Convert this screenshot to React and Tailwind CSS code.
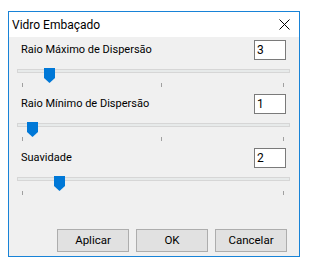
import React from 'react';

const sliders = [
  { label: 'Raio Máximo de Dispersão', value: '3', thumb: 'left-[27px]', mid: true },
  { label: 'Raio Mínimo de Dispersão', value: '1', thumb: 'left-[10px]', mid: true },
  { label: 'Suavidade', value: '2', thumb: 'left-[37px]', mid: false },
];

const Thumb = () => (
  <svg width="11" height="15" viewBox="0 0 11 15" className="block">
    <path d="M0 0 H11 V10 L5.5 15 L0 10 Z" fill="#0078d7" />
  </svg>
);

const SliderRow = ({ label, value, thumb, mid }) => (
  <div className="flex flex-col">
    <div className="flex items-center justify-between h-[20px] pl-[12px] pr-[13px]">
      <span className="text-[11px] text-black">{label}</span>
      <div className="w-[32px] h-[20px] border border-[#7a7a7a] bg-white text-[12px] leading-[18px] pl-[2px] text-black">
        {value}
      </div>
    </div>
    <div className="relative ml-[8px] w-[273px] h-[19px] mt-[8px]">
      <div className="absolute left-0 right-0 top-[1px] h-[4px] border border-[#d6d6d6] bg-[#e7eaea]" />
      <div className={`absolute top-0 ${thumb}`}>
        <Thumb />
      </div>
      <div className="absolute left-[5px] top-[15px] w-px h-[4px] bg-[#a0a0a0]" />
      {mid && <div className="absolute left-[144px] top-[15px] w-px h-[4px] bg-[#a0a0a0]" />}
      <div className="absolute left-[266px] top-[15px] w-px h-[4px] bg-[#a0a0a0]" />
    </div>
  </div>
);

export default function App() {
  return (
    <div className="w-[335px] h-[268px] bg-white pt-[11px] pl-[8px] font-['Roboto',sans-serif]">
      <div className="w-[292px] h-[246px] border border-[#1883d7] bg-[#f0f0f0] flex flex-col">
        <div className="h-[25px] bg-white flex items-center justify-between pl-[3px] pr-[9px]">
          <span className="text-[12px] text-black">Vidro Embaçado</span>
          <svg width="11" height="11" viewBox="0 0 11 11">
            <path d="M0.5 0.5 L10.5 10.5 M10.5 0.5 L0.5 10.5" stroke="#000" strokeWidth="1" />
          </svg>
        </div>
        <div className="flex flex-col gap-[7px] pt-[3px]">
          {sliders.map((s) => (
            <SliderRow key={s.label} {...s} />
          ))}
        </div>
        <div className="mt-auto flex justify-end gap-[7px] pr-[12px] pb-[4px]">
          {['Aplicar', 'OK', 'Cancelar'].map((b) => (
            <button
              key={b}
              className="w-[72px] h-[23px] border border-[#adadad] bg-[#e1e1e1] text-[11.5px] text-black"
            >
              {b}
            </button>
          ))}
        </div>
      </div>
    </div>
  );
}
